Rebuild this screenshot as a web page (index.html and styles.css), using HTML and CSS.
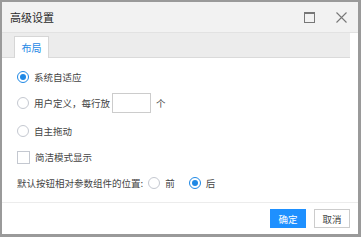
FILE: index.html
```html
<!DOCTYPE html>
<html lang="zh">
  <head>
    <meta charset="UTF-8" />
    <title>高级设置</title>
    <link rel="stylesheet" href="styles.css">
  </head>
  <body>
    <div class="dialog">
      <div class="header">
        <span class="title">高级设置</span>
        <div class="tools">
          <svg class="tool" width="11" height="11" viewBox="0 0 11 11">
            <rect x="0.5" y="0.5" width="10" height="10" fill="none" stroke="#777" />
            <rect x="0" y="0" width="11" height="2" fill="#777" />
          </svg>
          <svg class="tool" width="11" height="11" viewBox="0 0 11 11">
            <path d="M0.5 0.5 L10.5 10.5 M10.5 0.5 L0.5 10.5" stroke="#777" stroke-width="1.1" />
          </svg>
        </div>
      </div>

      <div class="tabs">
        <div class="tab">布局</div>
      </div>

      <div class="content">
        <div class="row">
          <span class="radio checked"></span>系统自适应
        </div>
        <div class="row">
          <span class="radio"></span>用户定义，每行放
          <span class="count"></span>
          <span class="unit">个</span>
        </div>
        <div class="row spaced">
          <span class="radio"></span>自主拖动
        </div>
        <div class="row">
          <span class="checkbox"></span>简洁模式显示
        </div>
        <div class="row">
          默认按钮相对参数组件的位置:
          <span class="radio inline"></span>前
          <span class="radio inline checked"></span>后
        </div>
      </div>

      <div class="footer">
        <button class="btn primary">确定</button>
        <button class="btn">取消</button>
      </div>
    </div>
  </body>
</html>
```

FILE: styles.css
```css
body {
  margin: 0;
  background-color: #9a9a9a;
  font-family: "Noto Sans CJK SC", "Liberation Sans", sans-serif;
  color: #333;
}

.dialog {
  margin: 2px 3px 3px 2px;
  height: 232px;
  background: white;
  display: flex;
  flex-direction: column;
}

.header {
  height: 30px;
  background-color: #f2f2f2;
  border-bottom: 1px solid #e2e2e2;
  padding: 0 10px 0 8px;
  display: flex;
  align-items: center;
  justify-content: space-between;
}

.title {
  font-size: 11px;
  color: #2a2a2a;
}

.tools {
  display: flex;
  align-items: center;
  gap: 21px;
  margin-right: 1px;
}

.tool {
  display: block;
}

/* 탭 */
.tabs {
  height: 21px;
  margin-right: 8px;
  padding: 3px 0 0 12px;
  background-color: #ececec;
  border-bottom: 1px solid #dadada;
  display: flex;
}

.tab {
  width: 33px;
  height: 21px;
  background: white;
  border: 1px solid #d6d6d6;
  border-bottom: none;
  margin-bottom: -1px;
  font-size: 10px;
  color: #1e88e5;
  display: flex;
  align-items: center;
  justify-content: center;
}

/* 내용 */
.content {
  padding: 6px 0 0 15px;
}

.row {
  height: 26px;
  display: flex;
  align-items: center;
  font-size: 9.5px;
  color: #444;
}

.row.spaced {
  margin-top: 2px;
}

.radio {
  width: 10px;
  height: 10px;
  border: 1px solid #c4c8d0;
  border-radius: 50%;
  margin-right: 5px;
  position: relative;
  flex-shrink: 0;
}

.radio.checked {
  border-color: #1e88e5;
}

.radio.checked::after {
  content: "";
  position: absolute;
  left: 2px;
  top: 2px;
  width: 6px;
  height: 6px;
  border-radius: 50%;
  background-color: #1e88e5;
}

.radio.inline {
  margin-left: 5px;
}

.radio.inline.checked {
  margin-left: 14px;
}

.checkbox {
  width: 11px;
  height: 11px;
  border: 1px solid #c4c8d0;
  margin-right: 5px;
  flex-shrink: 0;
}

.count {
  width: 37px;
  height: 18px;
  margin-left: 2px;
  border: 1px solid #ccc;
  background: white;
  flex-shrink: 0;
}

.unit {
  margin-left: 5px;
}

/* 하단 */
.footer {
  margin-top: auto;
  height: 31px;
  border-top: 1px solid #ececec;
  padding-right: 8px;
  display: flex;
  align-items: center;
  justify-content: flex-end;
  gap: 8px;
}

.btn {
  width: 36px;
  height: 19px;
  padding: 0;
  font-family: inherit;
  font-size: 9.5px;
  color: #444;
  background: white;
  border: 1px solid #ccc;
  cursor: pointer;
}

.btn.primary {
  background-color: #1e90ff;
  border-color: #1e90ff;
  color: white;
}
```
